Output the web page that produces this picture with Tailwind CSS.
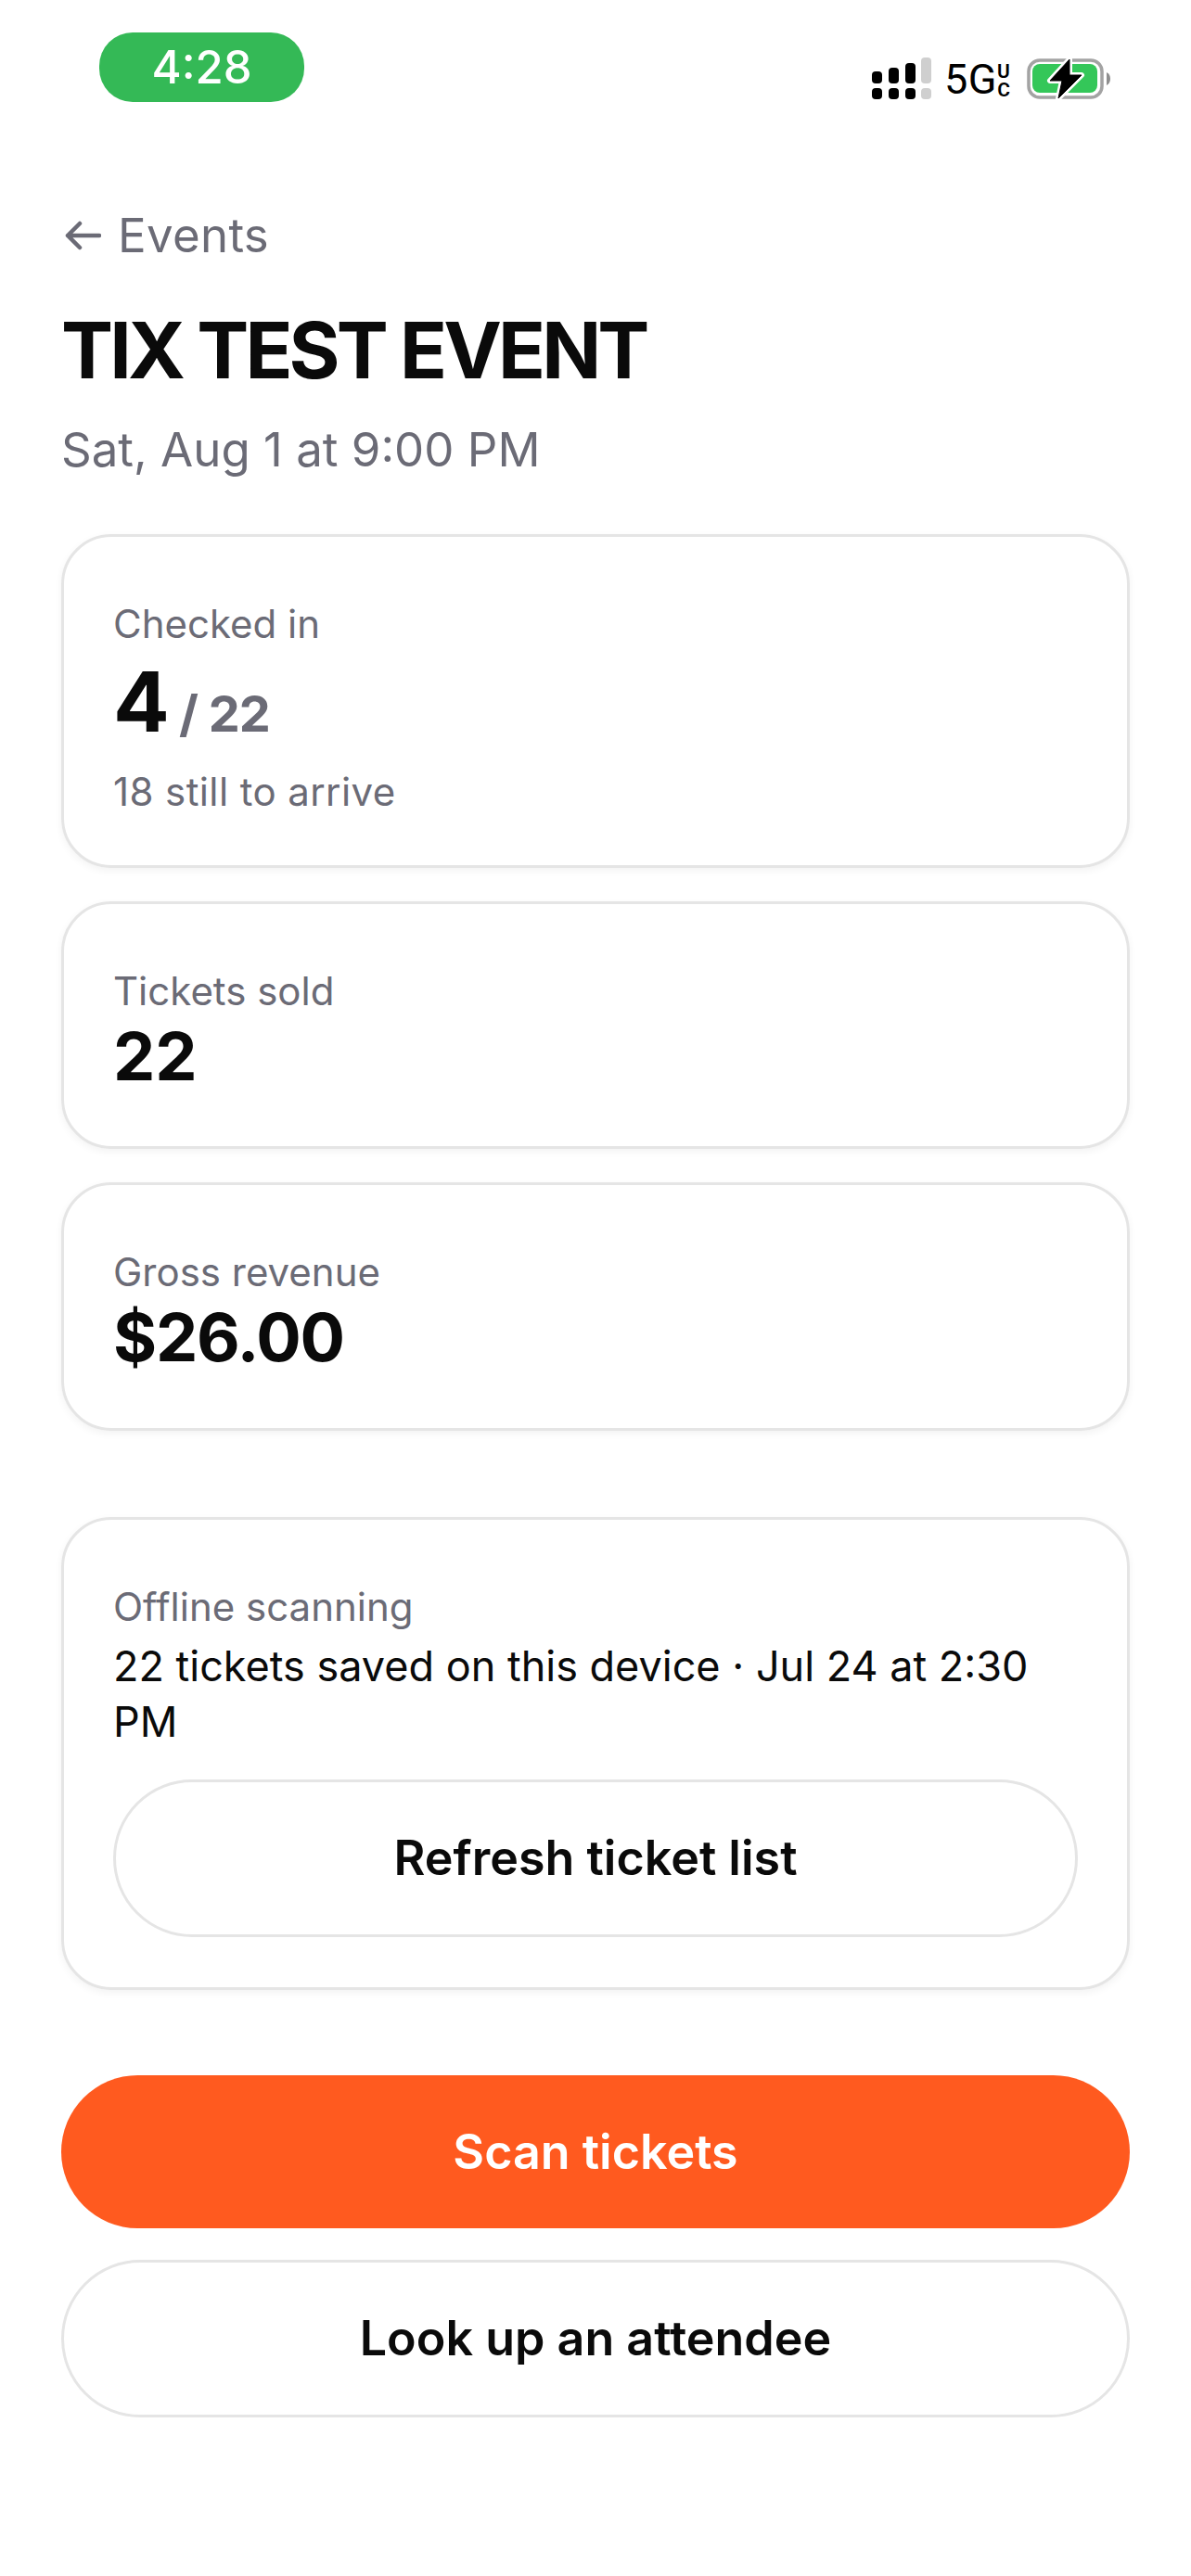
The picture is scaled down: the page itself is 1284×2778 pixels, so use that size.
<!DOCTYPE html>
<html lang="en">
  <head>
    <meta charset="UTF-8" />
    <meta name="viewport" content="width=device-width, initial-scale=1.0" />
    <title>TIX TEST EVENT</title>
    <script src="https://cdn.jsdelivr.net/npm/@tailwindcss/browser@4"></script>
  </head>
  <body class="bg-white text-[#0a0a0a] font-['Inter',sans-serif] h-[2778px] overflow-hidden">
    <!-- Status bar -->
    <div class="h-[126px] flex justify-between items-start">
      <div class="ml-[107px] mt-[35px] w-[221px] h-[75px] rounded-[36px] bg-[#34b956] text-white flex items-center justify-center text-[49px] font-medium">4:28</div>
      <div class="mr-[85px] mt-[62px] flex items-start">
        <svg width="64" height="46" viewBox="0 0 64 46" fill="#000">
          <rect x="0" y="15" width="11" height="13" rx="4" />
          <rect x="18" y="11" width="11" height="17" rx="4" />
          <rect x="36" y="6" width="11" height="22" rx="4" />
          <rect x="53" y="0" width="11" height="28" rx="4" fill="#cfcfcf" />
          <rect x="0" y="33" width="11" height="12" rx="4" />
          <rect x="18" y="33" width="11" height="12" rx="4" />
          <rect x="36" y="33" width="11" height="12" rx="4" />
          <rect x="53" y="33" width="11" height="12" rx="4" fill="#cfcfcf" />
        </svg>
        <div class="ml-[14px] flex items-start text-black font-['Roboto',sans-serif]">
          <span class="w-[55px] text-[45px] leading-[48px] tracking-[0.5px]">5G</span>
          <span class="mt-[5px] w-[18px] flex flex-col items-center text-[21px] leading-[20px] font-semibold"><span>U</span><span>C</span></span>
        </div>
        <svg class="ml-[16px]" width="92" height="46" viewBox="0 0 92 46">
          <rect x="2" y="3" width="79" height="40" rx="12" fill="none" stroke="#a3a3a3" stroke-width="3.5" />
          <rect x="6" y="7" width="70" height="31" rx="8" fill="#34c759" />
          <path d="M86 16 Q90 18 90 23 Q90 28 86 30 Z" fill="#8e8e8e" />
          <path d="M46 2 25 25H38L34 44 59 19H46Z" fill="#fff" stroke="#fff" stroke-width="6" stroke-linejoin="round" />
          <path d="M46 2 25 25H38L34 44 59 19H46Z" fill="#000" stroke="#000" stroke-width="1" stroke-linejoin="round" />
        </svg>
      </div>
    </div>

    <main class="px-[66px]">
      <a class="mt-[98px] flex items-center text-[#6b6b76] text-[51px] leading-[60px] tracking-[0.3px]">
        <svg class="ml-[4px] mr-[18px]" width="39" height="32" viewBox="0 0 39 32" fill="none" stroke="#6b6b76" stroke-width="4.5" stroke-linecap="round" stroke-linejoin="round"><path d="M37 16H3M16 3 3 16l13 13" /></svg>
        Events
      </a>
      <h1 class="mt-[46px] text-[84px] leading-[96px] font-bold tracking-[-3.85px]">TIX TEST EVENT</h1>
      <p class="mt-[29px] text-[51px] leading-[60px] text-[#6b6b76]">Sat, Aug 1 at 9:00 PM</p>

      <section class="mt-[61px] flex flex-col gap-[36px]">
        <div class="h-[360px] rounded-[54px] border-[3px] border-[#e5e5e5] shadow-[0_3px_9px_rgba(0,0,0,0.05)] px-[53px] pt-[66px]">
          <div class="text-[42px] leading-[56px] text-[#6b6b76]">Checked in</div>
          <div class="mt-[5px] flex items-baseline gap-[10px] leading-[102px]">
            <span class="text-[90px] font-bold">4</span>
            <span class="text-[54px] font-bold text-[#6b6b76] tracking-[-1px]">/ 22</span>
          </div>
          <div class="mt-[5px] text-[42px] leading-[56px] text-[#6b6b76] tracking-[0.4px]">18 still to arrive</div>
        </div>
        <div class="h-[267px] rounded-[54px] border-[3px] border-[#e5e5e5] shadow-[0_3px_9px_rgba(0,0,0,0.05)] px-[53px] pt-[66px]">
          <div class="text-[42px] leading-[56px] text-[#6b6b76]">Tickets sold</div>
          <div class="text-[72px] leading-[84px] font-bold">22</div>
        </div>
        <div class="h-[268px] rounded-[54px] border-[3px] border-[#e5e5e5] shadow-[0_3px_9px_rgba(0,0,0,0.05)] px-[53px] pt-[66px]">
          <div class="text-[42px] leading-[56px] text-[#6b6b76]">Gross revenue</div>
          <div class="text-[72px] leading-[84px] font-bold tracking-[-1.2px]">$26.00</div>
        </div>
      </section>

      <section class="mt-[93px] rounded-[54px] border-[3px] border-[#e5e5e5] shadow-[0_3px_9px_rgba(0,0,0,0.05)] px-[53px] pt-[66px] pb-[54px]">
        <div class="text-[42px] leading-[56px] text-[#6b6b76]">Offline scanning</div>
        <div class="mt-[6px] text-[45px] leading-[60px]">22 tickets saved on this device · Jul 24 at 2:30 PM</div>
        <button class="mt-[32px] block w-full h-[170px] rounded-full border-[3px] border-[#e5e5e5] text-[52px] font-semibold">Refresh ticket list</button>
      </section>

      <button class="mt-[92px] block w-full h-[165px] rounded-full bg-[#ff5a1f] text-white text-[52px] font-semibold">Scan tickets</button>
      <button class="mt-[34px] block w-full h-[170px] rounded-full border-[3px] border-[#e5e5e5] text-[52px] font-semibold">Look up an attendee</button>
    </main>
  </body>
</html>
